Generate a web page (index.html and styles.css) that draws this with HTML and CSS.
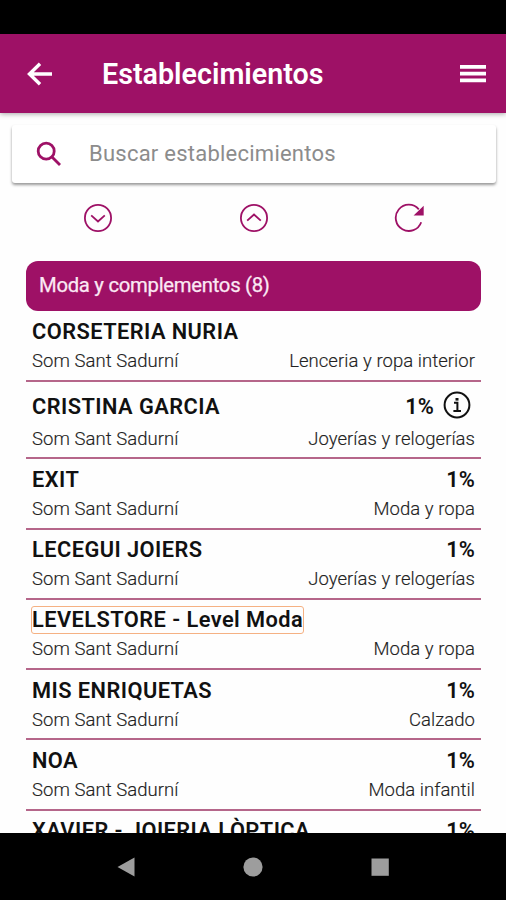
FILE: index.html
```html
<!DOCTYPE html>
<html lang="es">
<head>
<meta charset="utf-8">
<title>Establecimientos</title>
<link rel="stylesheet" href="styles.css">
</head>
<body>
<div class="status"></div>
<header class="bar">
  <svg class="back" viewBox="0 0 26 24"><path d="M25 12H3M13 1.8L2.5 12L13 22.2"/></svg>
  <h1>Establecimientos</h1>
  <svg class="menu" viewBox="0 0 26 20"><path d="M0 2.8h26M0 9.6h26M0 16.4h26"/></svg>
</header>
<main>
  <div class="search">
    <svg viewBox="0 0 26 26"><circle cx="10.2" cy="10.2" r="8"/><path d="M16 16l8 8"/></svg>
    <span>Buscar establecimientos</span>
  </div>
  <div class="tools">
    <svg viewBox="0 0 30 30"><circle cx="15" cy="15" r="13.1"/><path d="M8.2 12.3l6.8 6.2 6.8-6.2"/></svg>
    <svg viewBox="0 0 30 30"><circle cx="15" cy="15" r="13.1"/><path d="M8.2 17.7l6.8-6.2 6.8 6.2"/></svg>
    <svg viewBox="0 0 30 30"><path d="M27.2 19.2A13.1 13.1 0 1 1 24.8 6.3"/><path class="solid" d="M29.7 2.8V12.4H19.6Z"/></svg>
  </div>
  <section class="list">
    <h2>Moda y complementos (8)</h2>
    <article><div class="top"><b>CORSETERIA NURIA</b></div><div class="sub"><span>Som Sant Sadurní</span><span>Lenceria y ropa interior</span></div></article>
    <article class="info"><div class="top"><b>CRISTINA GARCIA</b><b class="pct">1%</b><svg viewBox="0 0 28 28"><circle cx="14" cy="14" r="12.4"/><path d="M11 11.7h3.4v8M10.4 20h7.6"/><path class="solid" d="M12.5 7h3v2.6h-3z"/></svg></div><div class="sub"><span>Som Sant Sadurní</span><span>Joyerías y relogerías</span></div></article>
    <article><div class="top"><b>EXIT</b><b class="pct">1%</b></div><div class="sub"><span>Som Sant Sadurní</span><span>Moda y ropa</span></div></article>
    <article><div class="top"><b>LECEGUI JOIERS</b><b class="pct">1%</b></div><div class="sub"><span>Som Sant Sadurní</span><span>Joyerías y relogerías</span></div></article>
    <article><div class="top"><b class="focus">LEVELSTORE - Level Moda</b></div><div class="sub"><span>Som Sant Sadurní</span><span>Moda y ropa</span></div></article>
    <article><div class="top"><b>MIS ENRIQUETAS</b><b class="pct">1%</b></div><div class="sub"><span>Som Sant Sadurní</span><span>Calzado</span></div></article>
    <article><div class="top"><b>NOA</b><b class="pct">1%</b></div><div class="sub"><span>Som Sant Sadurní</span><span>Moda infantil</span></div></article>
    <article><div class="top"><b>XAVIER - JOIERIA LÒPTICA</b><b class="pct">1%</b></div></article>
  </section>
</main>
<nav>
  <svg viewBox="0 0 20 20"><path d="M1.5 10L18.5 .4V19.6Z"/></svg>
  <svg viewBox="0 0 20 20"><circle cx="10" cy="10" r="9.6"/></svg>
  <svg viewBox="0 0 20 20"><path d="M1.5 1.5h17.3v17.3H1.5z"/></svg>
</nav>
</body>
</html>
```
FILE: styles.css
```css
* { box-sizing: border-box; }
body {
  margin: 0;
  width: 506px;
  height: 900px;
  overflow: hidden;
  display: flex;
  flex-direction: column;
  background: #fefefe;
  color: #111;
  font-family: Roboto, "Liberation Sans", sans-serif;
}
svg { display: block; flex: none; fill: none; }
h1, h2 { margin: 0; }
.status { height: 34px; flex: none; background: #000; }
.bar {
  height: 79px;
  flex: none;
  display: flex;
  align-items: center;
  padding: 0 20px 0 27px;
  background: #9e1166;
  color: #fff;
  box-shadow: 0 1px 5px rgba(0, 0, 0, .35);
}
.bar svg { stroke: #fff; }
.back { width: 26px; height: 24px; stroke-width: 3.4; }
.bar h1 {
  flex: 1;
  margin-left: 49px;
  font-size: 28.7px;
  font-weight: 600;
  line-height: 40px;
}
.menu { width: 26px; height: 20px; stroke-width: 3.8; }
main { flex: 1; min-height: 0; overflow: hidden; }
.search {
  height: 58px;
  margin: 12px 10px 0 12px;
  padding-left: 24px;
  display: flex;
  align-items: center;
  border-radius: 3px;
  background: #fff;
  color: #8c8c8c;
  font-size: 22px;
  box-shadow: 0 2px 3px rgba(0, 0, 0, .4);
}
.search svg { width: 26px; height: 26px; margin-right: 27px; stroke: #9e1166; stroke-width: 2.8; }
.search span { padding-bottom: 2px; letter-spacing: .24px; }
.tools {
  height: 70px;
  padding: 0 82px 0 83px;
  display: flex;
  align-items: center;
  justify-content: space-between;
}
.tools svg { width: 30px; height: 30px; stroke: #9e1166; stroke-width: 1.8; }
.tools .solid { fill: #9e1166; stroke: none; }
.list { margin: 8px 25px 0 26px; }
.list h2 {
  height: 50px;
  padding-left: 13px;
  border-radius: 12px;
  background: #9e1166;
  color: #fbe9f4;
  font-size: 20.3px;
  font-weight: 400;
  line-height: 48px;
  letter-spacing: -.28px;
  -webkit-text-stroke: .25px #fbe9f4;
}
article {
  height: 70.3px;
  padding: 5.4px 6px 0;
  border-bottom: 2px solid #b5668a;
}
article:first-of-type { height: 71px; padding-top: 6.4px; }
.top { height: 30px; display: flex; align-items: center; font-size: 21.8px; line-height: 30px; }
.top b { font-weight: 600; white-space: nowrap; letter-spacing: .44px; }
.top .pct { margin-left: auto; letter-spacing: .1px; }
.sub {
  display: flex;
  justify-content: space-between;
  color: #222;
  font-size: 18.5px;
  font-weight: 300;
  line-height: 28px;
  letter-spacing: .05px;
  -webkit-text-stroke: .15px #222;
}
.info { height: 77.3px; padding-top: 8px; }
.info .top { height: 34px; margin-bottom: 1px; }
.info svg { width: 28px; height: 28px; margin: -4px 4px 0 9px; stroke: #111; stroke-width: 2; }
.info .solid { fill: #111; stroke: none; }
.top .focus { line-height: 26px; border-radius: 2px; outline: 1px solid #f5b183; }
nav {
  height: 67px;
  flex: none;
  display: flex;
  align-items: center;
  justify-content: space-between;
  padding: 0 116px;
  background: #000;
}
nav svg { width: 20px; height: 20px; fill: #9d9d9d; }
```
